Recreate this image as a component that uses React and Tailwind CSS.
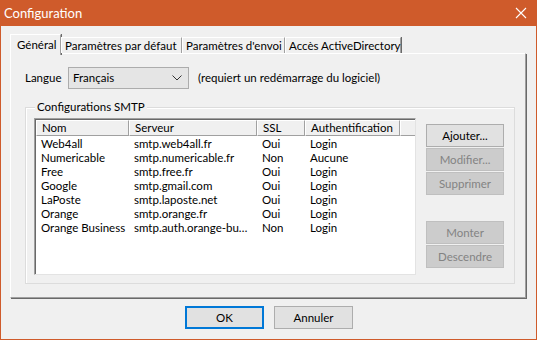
import React from 'react'

const rows = [
  ['Web4all', 'smtp.web4all.fr', 'Oui', 'Login'],
  ['Numericable', 'smtp.numericable.fr', 'Non', 'Aucune'],
  ['Free', 'smtp.free.fr', 'Oui', 'Login'],
  ['Google', 'smtp.gmail.com', 'Oui', 'Login'],
  ['LaPoste', 'smtp.laposte.net', 'Oui', 'Login'],
  ['Orange', 'smtp.orange.fr', 'Oui', 'Login'],
  ['Orange Business', 'smtp.auth.orange-bu…', 'Non', 'Login'],
]

const cols = [93, 128, 48, 95]

export default function App(){
  return (
    <div className="w-[537px] h-[340px] bg-[#cf5b2b] flex flex-col px-[1px] pb-[1px] text-[11.5px] text-black leading-[14px] whitespace-nowrap" style={{fontFamily:'Lato, "Open Sans", sans-serif'}}>
      {/* title bar */}
      <div className="h-[26px] flex items-center justify-between pl-[3px] pr-[8px] text-white">
        <span className="text-[13px]">Configuration</span>
        <svg width="14" height="14" viewBox="0 0 14 14">
          <path d="M2 2 L12 12 M12 2 L2 12" stroke="#fff" strokeWidth="1.1" fill="none"/>
        </svg>
      </div>

      <div className="flex-1 bg-[#f0f0f0] flex flex-col">
        {/* tabs */}
        <div className="mt-[8px] ml-[9px] h-[19px] flex items-end relative z-10">
          <Tab active w="w-[51px]">Général</Tab>
          <Tab w="w-[121px]">Paramètres par défaut</Tab>
          <Tab w="w-[103px]">Paramètres d'envoi</Tab>
          <Tab w="w-[116px]">Accès ActiveDirectory</Tab>
        </div>

        {/* tab panel */}
        <div className="ml-[9px] w-[516px] h-[245px] border-t border-l border-white border-r border-b border-r-[#a0a0a0] border-b-[#a0a0a0] shadow-[1px_1px_0_#696969] pt-[13px] px-[14px] flex flex-col">
          <div className="flex items-center h-[22px]">
            <span className="w-[43px]">Langue</span>
            <div className="w-[121px] h-[22px] bg-[#e5e5e5] border border-[#acacac] flex items-center justify-between pl-[4px] pr-[6px]">
              <span>Français</span>
              <svg width="10" height="6" viewBox="0 0 10 6"><path d="M0.5 0.5 L5 5 L9.5 0.5" stroke="#333" fill="none" strokeWidth="1"/></svg>
            </div>
            <span className="ml-[9px]">(requiert un redémarrage du logiciel)</span>
          </div>

          {/* group box */}
          <div className="relative mt-[18px] w-[490px] h-[177px] border border-[#dcdcdc] shadow-[inset_1px_1px_0_#fff] pl-[8px] pt-[10px] flex gap-[10px]">
            <span className="absolute left-[9px] top-[-8px] bg-[#f0f0f0] px-[2px]">Configurations SMTP</span>

            {/* list */}
            <div className="w-[382px] h-[157px] bg-white border-t border-l border-[#a0a0a0] border-r border-b border-r-[#e3e3e3] border-b-[#e3e3e3] shadow-[inset_1px_1px_0_#696969] pl-[1px] pt-[1px] overflow-hidden">
              <div className="flex h-[16px]">
                {['Nom', 'Serveur', 'SSL', 'Authentification'].map((h, i) => (
                  <div key={h} style={{width: cols[i]}} className="shrink-0 h-full bg-[#f0f0f0] border-t border-l border-white border-r border-b border-r-[#a0a0a0] border-b-[#a0a0a0] pl-[5px] flex items-center">{h}</div>
                ))}
                <div className="flex-1 h-full bg-[#f0f0f0] border-t border-l border-white border-b border-b-[#a0a0a0]"></div>
              </div>
              <div className="pt-[1px]">
                {rows.map(r => (
                  <div key={r[0]} className="flex h-[14px] items-center">
                    {r.map((c, i) => (
                      <div key={i} style={{width: cols[i]}} className="shrink-0 pl-[5px]">{c}</div>
                    ))}
                  </div>
                ))}
              </div>
            </div>

            {/* buttons */}
            <div className="flex flex-col pt-[6px] w-[78px]">
              <Btn>Ajouter...</Btn>
              <Btn disabled cls="mt-[1px]">Modifier...</Btn>
              <Btn disabled cls="mt-[1px]">Supprimer</Btn>
              <Btn disabled cls="mt-[26px]">Monter</Btn>
              <Btn disabled cls="mt-[1px]">Descendre</Btn>
            </div>
          </div>
        </div>

        {/* footer */}
        <div className="mt-[8px] flex justify-center gap-[10px] pl-[1px]">
          <button className="w-[79px] h-[23px] bg-[#e1e1e1] border-2 border-[#0078d7] flex items-center justify-center">OK</button>
          <button className="w-[79px] h-[23px] bg-[#e1e1e1] border border-[#adadad] flex items-center justify-center">Annuler</button>
        </div>
      </div>
    </div>
  )
}

function Tab({children, active, w}){
  if(active){
    return (
      <div className={`${w} h-[21px] -mb-[2px] bg-[#f0f0f0] border-t border-l border-white border-r border-r-[#a0a0a0] shadow-[1px_0_0_#696969] pl-[6px] pt-[3px] flex`}>
        {children}
      </div>
    )
  }
  return (
    <div className={`${w} h-[16px] bg-[#f0f0f0] border-t border-l border-white border-r border-r-[#a0a0a0] shadow-[1px_0_0_#696969] pl-[3px] pt-[1px] flex`}>
      {children}
    </div>
  )
}

function Btn({children, disabled, cls=''}){
  return (
    <div className={`h-[23px] flex items-center justify-center border ${disabled ? 'bg-[#cccccc] border-[#bfbfbf] text-[#838383]' : 'bg-[#e1e1e1] border-[#adadad]'} ${cls}`}>
      {children}
    </div>
  )
}
